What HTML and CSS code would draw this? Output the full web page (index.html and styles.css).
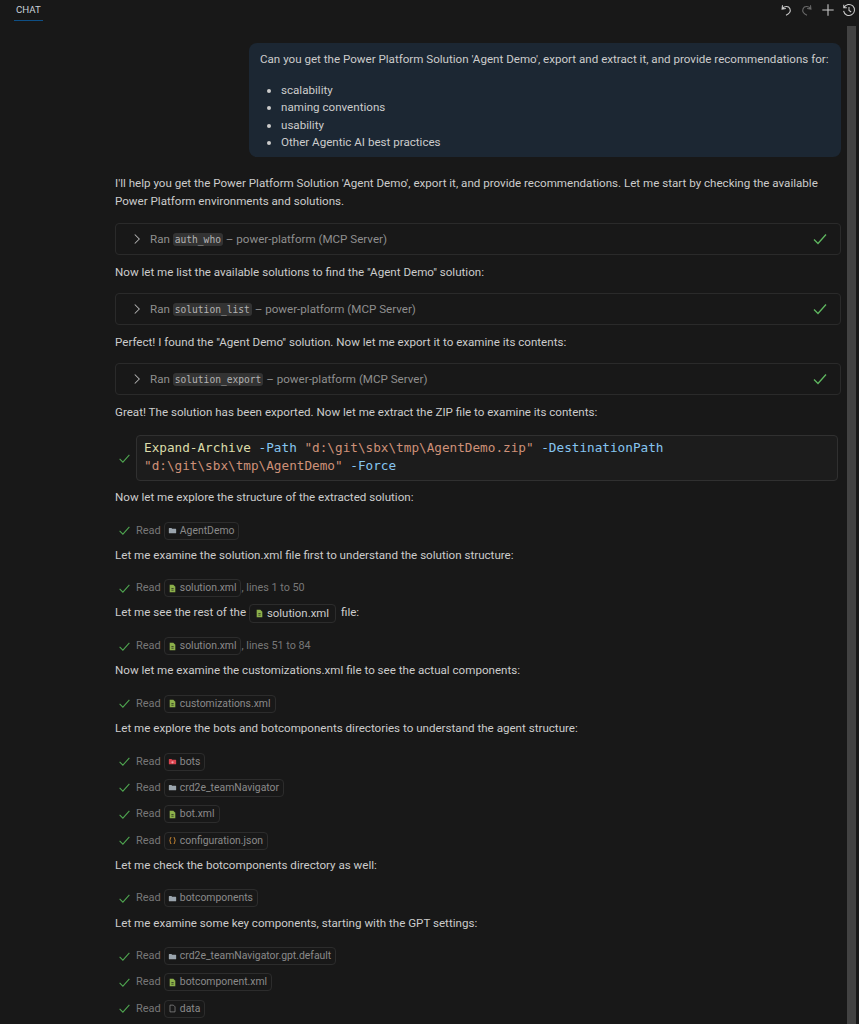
FILE: index.html
```html
<!DOCTYPE html>
<html lang="en">
<head>
<meta charset="utf-8">
<title>Chat</title>
<link rel="stylesheet" href="styles.css">
</head>
<body>
<svg class="defs" aria-hidden="true">
  <symbol id="check" viewBox="0 0 16 16"><path d="M2 8.500 6 12.500 14 3.500" fill="none" stroke="currentColor" stroke-width="1.300"/></symbol>
  <symbol id="chev" viewBox="0 0 16 16"><path d="M5 2 11 8l-6 6" fill="none" stroke="currentColor" stroke-width="1.400"/></symbol>
  <symbol id="folder" viewBox="0 0 16 16"><path d="M1.500 4.500a1 1 0 0 1 1-1h3.500l1.500 1.500h6a1 1 0 0 1 1 1v6a1 1 0 0 1-1 1h-11a1 1 0 0 1-1-1z" fill="currentColor"/></symbol>
  <symbol id="file" viewBox="0 0 16 16"><path d="M3 1.500h6.500L13 5v9.500H3z" fill="currentColor"/><path d="M6 8h4M6 11h4" stroke="#1a1a1a" stroke-width="1.200"/></symbol>
  <symbol id="braces" viewBox="0 0 16 16"><path d="M6 2.500C4 2.500 4 4 4 5.500S3.500 8 2.500 8C3.500 8 4 9 4 10.500S4 13.500 6 13.500M10 2.500C12 2.500 12 4 12 5.500S12.500 8 13.500 8C12.500 8 12 9 12 10.500S12 13.500 10 13.500" fill="none" stroke="currentColor" stroke-width="1.800"/></symbol>
  <symbol id="page" viewBox="0 0 16 16"><path d="M3.500 2h6L12.500 5v9h-9z" fill="none" stroke="currentColor" stroke-width="1.300"/></symbol>
  <symbol id="folder-bot" viewBox="0 0 16 16"><path d="M1.500 4.500a1 1 0 0 1 1-1h3.500l1.500 1.500h6a1 1 0 0 1 1 1v6a1 1 0 0 1-1 1h-11a1 1 0 0 1-1-1z" fill="currentColor"/><circle cx="8" cy="9.500" r="2" fill="#f4a0a8"/></symbol>
</svg>

<header class="topbar">
  <div class="tab">CHAT</div>
  <div class="actions">
    <svg class="act" viewBox="0 0 16 16"><path d="M4 2.500 3.500 7l4.300-.8M3.800 6.800C5.500 3.500 11 3 12.500 6.500c1.200 3-1 5.800-4.500 7.500" fill="none" stroke="currentColor" stroke-width="1.200"/></svg>
    <svg class="act dim" viewBox="0 0 16 16"><path d="M12 2.500 12.500 7l-4.300-.8M12.200 6.800C10.500 3.500 5 3 3.500 6.500c-1.200 3 1 5.800 4.500 7.500" fill="none" stroke="currentColor" stroke-width="1.200"/></svg>
    <svg class="act" viewBox="0 0 16 16"><path d="M8 1.500v13M1.500 8h13" fill="none" stroke="currentColor" stroke-width="1.200"/></svg>
    <svg class="act" viewBox="0 0 16 16"><path d="M2 2v3.500h3.500M2.300 5.300A6.300 6.300 0 1 1 1.800 9M8 4.500V8.500l2.500 1.800" fill="none" stroke="currentColor" stroke-width="1.200"/></svg>
  </div>
</header>

<div class="pane">
  <main class="content">
    <section class="bubble">
      <p class="bubble-text">Can you get the Power Platform Solution 'Agent Demo', export and extract it, and provide recommendations for:</p>
      <ul class="bubble-list">
        <li>scalability</li>
        <li>naming conventions</li>
        <li>usability</li>
        <li>Other Agentic AI best practices</li>
      </ul>
    </section>

    <p class="msg msg-intro">I'll help you get the Power Platform Solution 'Agent Demo', export it, and provide recommendations. Let me start by checking the available Power Platform environments and solutions.</p>

    <div class="tool"><svg class="chev"><use href="#chev"/></svg><span class="tool-label">Ran <code class="tool-code">auth_who</code> – power-platform (MCP Server)</span><svg class="tool-check"><use href="#check"/></svg></div>
    <p class="msg msg-tool">Now let me list the available solutions to find the "Agent Demo" solution:</p>
    <div class="tool"><svg class="chev"><use href="#chev"/></svg><span class="tool-label">Ran <code class="tool-code">solution_list</code> – power-platform (MCP Server)</span><svg class="tool-check"><use href="#check"/></svg></div>
    <p class="msg msg-tool">Perfect! I found the "Agent Demo" solution. Now let me export it to examine its contents:</p>
    <div class="tool"><svg class="chev"><use href="#chev"/></svg><span class="tool-label">Ran <code class="tool-code">solution_export</code> – power-platform (MCP Server)</span><svg class="tool-check"><use href="#check"/></svg></div>
    <p class="msg msg-tool">Great! The solution has been exported. Now let me extract the ZIP file to examine its contents:</p>

    <div class="term-row">
      <svg class="check"><use href="#check"/></svg>
      <pre class="term"><span class="t-cmd">Expand-Archive</span> <span class="t-flag">-Path</span> <span class="t-str">"d:\git\sbx\tmp\AgentDemo.zip"</span> <span class="t-flag">-DestinationPath</span>
<span class="t-str">"d:\git\sbx\tmp\AgentDemo"</span> <span class="t-flag">-Force</span></pre>
    </div>

    <p class="msg">Now let me explore the structure of the extracted solution:</p>
    <div class="reads">
      <div class="read"><svg class="check"><use href="#check"/></svg><span class="read-word">Read</span><span class="chip"><svg class="ico c-folder"><use href="#folder"/></svg>AgentDemo</span></div>
    </div>

    <p class="msg">Let me examine the solution.xml file first to understand the solution structure:</p>
    <div class="reads">
      <div class="read"><svg class="check"><use href="#check"/></svg><span class="read-word">Read</span><span class="chip"><svg class="ico c-xml"><use href="#file"/></svg>solution.xml</span><span class="after">, lines 1 to 50</span></div>
    </div>

    <p class="msg">Let me see the rest of the <span class="chip chip-inline"><svg class="ico c-xml"><use href="#file"/></svg>solution.xml</span> file:</p>
    <div class="reads">
      <div class="read"><svg class="check"><use href="#check"/></svg><span class="read-word">Read</span><span class="chip"><svg class="ico c-xml"><use href="#file"/></svg>solution.xml</span><span class="after">, lines 51 to 84</span></div>
    </div>

    <p class="msg">Now let me examine the customizations.xml file to see the actual components:</p>
    <div class="reads">
      <div class="read"><svg class="check"><use href="#check"/></svg><span class="read-word">Read</span><span class="chip"><svg class="ico c-xml"><use href="#file"/></svg>customizations.xml</span></div>
    </div>

    <p class="msg">Let me explore the bots and botcomponents directories to understand the agent structure:</p>
    <div class="reads">
      <div class="read"><svg class="check"><use href="#check"/></svg><span class="read-word">Read</span><span class="chip"><svg class="ico c-red"><use href="#folder-bot"/></svg>bots</span></div>
      <div class="read"><svg class="check"><use href="#check"/></svg><span class="read-word">Read</span><span class="chip"><svg class="ico c-folder"><use href="#folder"/></svg>crd2e_teamNavigator</span></div>
      <div class="read"><svg class="check"><use href="#check"/></svg><span class="read-word">Read</span><span class="chip"><svg class="ico c-xml"><use href="#file"/></svg>bot.xml</span></div>
      <div class="read"><svg class="check"><use href="#check"/></svg><span class="read-word">Read</span><span class="chip"><svg class="ico c-json"><use href="#braces"/></svg>configuration.json</span></div>
    </div>

    <p class="msg">Let me check the botcomponents directory as well:</p>
    <div class="reads">
      <div class="read"><svg class="check"><use href="#check"/></svg><span class="read-word">Read</span><span class="chip"><svg class="ico c-folder"><use href="#folder"/></svg>botcomponents</span></div>
    </div>

    <p class="msg">Let me examine some key components, starting with the GPT settings:</p>
    <div class="reads">
      <div class="read"><svg class="check"><use href="#check"/></svg><span class="read-word">Read</span><span class="chip"><svg class="ico c-folder"><use href="#folder"/></svg>crd2e_teamNavigator.gpt.default</span></div>
      <div class="read"><svg class="check"><use href="#check"/></svg><span class="read-word">Read</span><span class="chip"><svg class="ico c-xml"><use href="#file"/></svg>botcomponent.xml</span></div>
      <div class="read"><svg class="check"><use href="#check"/></svg><span class="read-word">Read</span><span class="chip"><svg class="ico c-page"><use href="#page"/></svg>data</span></div>
    </div>
  </main>
  <div class="scrollbar"></div>
</div>
</body>
</html>
```
FILE: styles.css
```css
* { box-sizing: border-box; }
html, body { height: 100%; }
body {
  margin: 0;
  height: 1024px;
  overflow: hidden;
  background: #181818;
  color: #cccccc;
  font-family: Roboto, "Liberation Sans", sans-serif;
  font-size: 11.600px;
  line-height: 18px;
}
.defs { display: none; }

.topbar {
  height: 26px;
  display: flex;
  justify-content: space-between;
  padding: 0 3px 0 14px;
}
.tab {
  height: 21px;
  padding: 1px 2px 0;
  font-size: 9.700px;
  color: #c8d0d8;
  border-bottom: 1px solid #0e4f85;
}
.actions { display: flex; gap: 7px; padding-top: 3px; color: #cccccc; }
.act { width: 14px; height: 14px; }
.dim { color: #6a6a6a; }

.pane { display: flex; height: 998px; }
.content { flex: 1; min-width: 0; padding: 17px 6px 0 115px; }
.scrollbar { width: 9px; margin-right: 3px; background: #424242; }

.bubble {
  margin-left: 134px;
  padding: 7px 11px 5px;
  height: 114px;
  background: #1c2733;
  border-radius: 8px;
}
.bubble-text { margin: 0 0 14px; }
.bubble-list { margin: 0; padding-left: 21px; }
.bubble-list li { line-height: 17.300px; }

.msg { margin: 0 0 15.500px; }
.msg-intro { margin: 17px 0 13px; }
.msg-tool { margin: 0 0 12px; }

.tool {
  display: flex;
  align-items: center;
  height: 32px;
  margin-bottom: 8px;
  padding: 0 12px 0 15px;
  border: 1px solid #2a2a2a;
  border-radius: 4px;
  color: #8f8f8f;
}
.chev { width: 12px; height: 12px; color: #b0b0b0; margin-right: 7px; flex: none; }
.tool-label { flex: 1; }
.tool-code {
  font-family: "DejaVu Sans Mono", monospace;
  font-size: 9.600px;
  padding: 1px 2px;
  background: #333333;
  border-radius: 3px;
  color: #b4b4b4;
}
.tool-check { width: 16px; height: 16px; color: #5fb760; flex: none; }

.term-row { display: flex; align-items: center; margin: 14px 0 7px 3px; }
.check { width: 13px; height: 13px; color: #4fa650; flex: none; margin-right: 5px; }
.term {
  flex: 1;
  margin: 0 3px 0 0;
  padding: 3px 7px;
  height: 46px;
  background: #1c1c1c;
  border: 1px solid #303030;
  border-radius: 4px;
  font-family: "DejaVu Sans Mono", monospace;
  font-size: 12.700px;
  line-height: 18px;
}
.t-cmd { color: #dcdcaa; }
.t-flag { color: #86c5f0; }
.t-str { color: #ce9178; }

.reads { display: flex; flex-direction: column; gap: 8.400px; margin: 0 0 6.170px 3px; }
.read { display: flex; align-items: center; height: 18px; color: #777777; }
.read-word { font-size: 11px; }
.read .chip { margin-left: 3px; }
.after { color: #777777; font-size: 10.800px; }
.chip {
  display: inline-flex;
  align-items: center;
  height: 18px;
  padding: 0 4px 0 3px;
  border: 1px solid #2c2c2c;
  border-radius: 4px;
  color: #8a8a8a;
  font-size: 10.400px;
}
.chip-inline {
  height: 19px;
  margin: -1px 2px -1px 0;
  padding: 0 6px 0 5px;
  color: #cccccc;
  font-size: 11.400px;
  vertical-align: middle;
}
.ico { width: 9px; height: 9px; margin-right: 3px; flex: none; }
.c-folder { color: #9aa4ad; }
.c-xml { color: #8cb04a; }
.c-red { color: #d9434e; }
.c-json { color: #c08030; }
.c-page { color: #8a8a8a; }
```
